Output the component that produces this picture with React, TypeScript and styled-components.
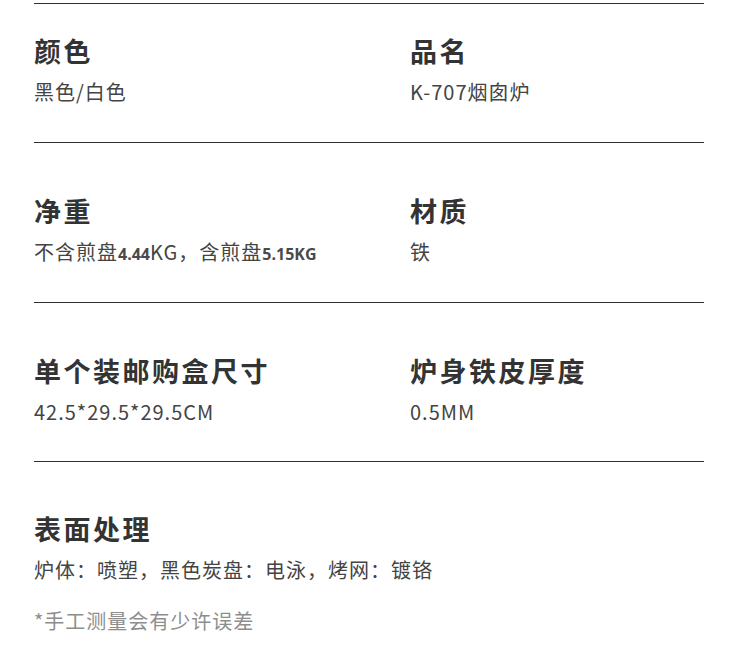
import React from "react";
import styled, { createGlobalStyle } from "styled-components";

const GlobalStyle = createGlobalStyle`
  html, body {
    margin: 0;
    padding: 0;
    background: #ffffff;
  }
  body {
    font-family: "Noto Sans CJK SC", "Noto Sans", sans-serif;
  }
`;

const Page = styled.div`
  padding-top: 3px;
  margin-left: 34px;
  width: 670px;
`;

const Row = styled.section<{ $padTop: number; $padBottom: number }>`
  display: grid;
  grid-template-columns: 376px 1fr;
  border-top: 1px solid #2f2f2f;
  padding-top: ${(p) => p.$padTop}px;
  padding-bottom: ${(p) => p.$padBottom}px;
`;

const Cell = styled.div`
  display: flex;
  flex-direction: column;
  gap: 10px;
`;

const Title = styled.h3`
  margin: 0;
  font-size: 27px;
  line-height: 36px;
  font-weight: 700;
  letter-spacing: 2.5px;
  color: #333333;
`;

const Value = styled.p`
  margin: 0;
  height: 26px;
  font-size: 20px;
  line-height: 26px;
  font-weight: 400;
  letter-spacing: 1px;
  color: #444444;
  white-space: nowrap;
`;

const Strong = styled.span`
  font-family: "Open Sans", "Noto Sans", sans-serif;
  font-size: 16px;
  line-height: 1;
  font-weight: 700;
  letter-spacing: 0;
  color: #4a4a4a;
`;

const Note = styled.p`
  margin: 0;
  font-size: 20px;
  line-height: 26px;
  letter-spacing: 1px;
  color: #8e8e8e;
`;

type Spec = { title: string; value: React.ReactNode };

const rows: { items: Spec[]; top: number; bottom: number }[] = [
  {
    top: 29,
    bottom: 37,
    items: [
      { title: "颜色", value: "黑色/白色" },
      { title: "品名", value: "K-707烟囱炉" },
    ],
  },
  {
    top: 50,
    bottom: 37,
    items: [
      {
        title: "净重",
        value: (
          <>
            不含煎盘<Strong>4.44</Strong>KG，含煎盘<Strong>5.15KG</Strong>
          </>
        ),
      },
      { title: "材质", value: "铁" },
    ],
  },
  {
    top: 50,
    bottom: 36,
    items: [
      { title: "单个装邮购盒尺寸", value: "42.5*29.5*29.5CM" },
      { title: "炉身铁皮厚度", value: "0.5MM" },
    ],
  },
  {
    top: 49,
    bottom: 25,
    items: [{ title: "表面处理", value: "炉体：喷塑，黑色炭盘：电泳，烤网：镀铬" }],
  },
];

export default function App() {
  return (
    <>
      <GlobalStyle />
      <Page>
        {rows.map((row, i) => (
          <Row key={i} $padTop={row.top} $padBottom={row.bottom}>
            {row.items.map((it) => (
              <Cell key={it.title}>
                <Title>{it.title}</Title>
                <Value>{it.value}</Value>
              </Cell>
            ))}
          </Row>
        ))}
        <Note>*手工测量会有少许误差</Note>
      </Page>
    </>
  );
}
